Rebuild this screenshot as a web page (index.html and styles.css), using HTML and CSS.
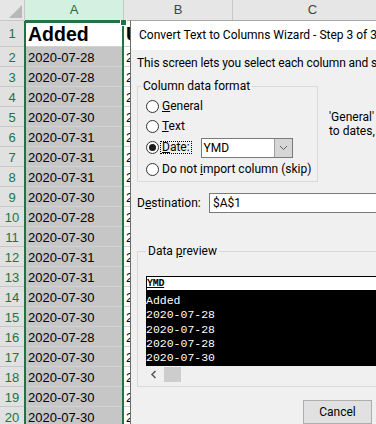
FILE: index.html
```html
<!DOCTYPE html>
<html>
<head>
<meta charset="utf-8">
<link rel="stylesheet" href="styles.css">
</head>
<body>
<div class="sheet">
  <div class="grid">
    <div class="c corner"><svg width="24" height="20" viewBox="0 0 24 20"><polygon points="9,18 22,18 22,5" fill="#b8b8b8"/></svg></div>
    <div class="c ch sel">A</div>
    <div class="c ch">B</div>
    <div class="c ch">C</div>

    <div class="c rh r1">1</div><div class="c a active">Added</div><div class="c b bold">Updated</div><div class="c r1"></div>
    <div class="c rh">2</div><div class="c a">2020-07-28</div><div class="c b">2020-07-28</div><div class="c"></div>
    <div class="c rh">3</div><div class="c a">2020-07-28</div><div class="c b">2020-07-28</div><div class="c"></div>
    <div class="c rh">4</div><div class="c a">2020-07-28</div><div class="c b">2020-07-28</div><div class="c"></div>
    <div class="c rh">5</div><div class="c a">2020-07-30</div><div class="c b">2020-07-30</div><div class="c"></div>
    <div class="c rh">6</div><div class="c a">2020-07-31</div><div class="c b">2020-07-31</div><div class="c"></div>
    <div class="c rh">7</div><div class="c a">2020-07-31</div><div class="c b">2020-07-31</div><div class="c"></div>
    <div class="c rh">8</div><div class="c a">2020-07-31</div><div class="c b">2020-07-31</div><div class="c"></div>
    <div class="c rh">9</div><div class="c a">2020-07-30</div><div class="c b">2020-07-30</div><div class="c"></div>
    <div class="c rh">10</div><div class="c a">2020-07-28</div><div class="c b">2020-07-28</div><div class="c"></div>
    <div class="c rh">11</div><div class="c a">2020-07-30</div><div class="c b">2020-07-30</div><div class="c"></div>
    <div class="c rh">12</div><div class="c a">2020-07-31</div><div class="c b">2020-07-31</div><div class="c"></div>
    <div class="c rh">13</div><div class="c a">2020-07-31</div><div class="c b">2020-07-31</div><div class="c"></div>
    <div class="c rh">14</div><div class="c a">2020-07-30</div><div class="c b">2020-07-30</div><div class="c"></div>
    <div class="c rh">15</div><div class="c a">2020-07-30</div><div class="c b">2020-07-30</div><div class="c"></div>
    <div class="c rh">16</div><div class="c a">2020-07-28</div><div class="c b">2020-07-28</div><div class="c"></div>
    <div class="c rh">17</div><div class="c a">2020-07-30</div><div class="c b">2020-07-30</div><div class="c"></div>
    <div class="c rh">18</div><div class="c a">2020-07-30</div><div class="c b">2020-07-30</div><div class="c"></div>
    <div class="c rh">19</div><div class="c a">2020-07-30</div><div class="c b">2020-07-30</div><div class="c"></div>
    <div class="c rh">20</div><div class="c a">2020-07-30</div><div class="c b">2020-07-30</div><div class="c"></div>
  </div>
  <div class="selection"><span class="handle"></span></div>

  <div class="dialog">
    <div class="titlebar">Convert Text to Columns Wizard - Step 3 of 3</div>
    <div class="dbody">
      <p class="intro">This screen lets you select each column and set the Data Format.</p>
      <div class="format-row">
        <fieldset class="group fmt">
          <legend>Column data format</legend>
          <div class="radio"><span class="dot"></span><span><u>G</u>eneral</span></div>
          <div class="radio"><span class="dot"></span><span><u>T</u>ext</span></div>
          <div class="radio date"><span class="dot on"></span><span class="focus"><u>D</u>ate:</span>
            <div class="select"><span class="val">YMD</span><span class="arrow"><svg width="9" height="6" viewBox="0 0 9 6"><polyline points="1,1 4.5,4.5 8,1" fill="none" stroke="#606060" stroke-width="1"/></svg></span></div>
          </div>
          <div class="radio"><span class="dot"></span><span>Do not <u>i</u>mport column (skip)</span></div>
        </fieldset>
        <p class="hint">'General' converts numeric values to numbers, date values<br>to dates, and all remaining values to text.</p>
      </div>
      <div class="dest"><span class="dlabel">D<u>e</u>stination:</span><div class="input">$A$1</div></div>
      <fieldset class="group preview">
        <legend>Data <u>p</u>review</legend>
        <div class="pv">
          <div class="pvhead"><u>YMD</u></div>
          <div class="pvbody">Added<br>2020-07-28<br>2020-07-28<br>2020-07-28<br>2020-07-30</div>
          <div class="pvscroll"><svg class="lt" width="8" height="9" viewBox="0 0 8 9"><polyline points="5.5,1 2,4.5 5.5,8" fill="none" stroke="#5a5a5a" stroke-width="1.6"/></svg><span class="thumb"></span></div>
        </div>
      </fieldset>
      <div class="buttons"><span class="btn">Cancel</span></div>
    </div>
  </div>
</div>
</body>
</html>
```

FILE: styles.css
```css
html, body {
  margin: 0;
  padding: 0;
}
body {
  width: 376px;
  height: 424px;
  overflow: hidden;
  background: #ffffff;
}
.sheet {
  position: relative;
  width: 376px;
  height: 424px;
  overflow: hidden;
}
.grid {
  display: grid;
  grid-template-columns: 25px 99px 109px 160px;
  grid-template-rows: 21px 26px repeat(19, 20px);
  font-family: "Liberation Sans", Arial, sans-serif;
  font-size: 13px;
  color: #000;
}
.c {
  box-sizing: border-box;
  border-right: 1px solid #d4d4d4;
  border-bottom: 1px solid #d4d4d4;
  overflow: hidden;
  white-space: nowrap;
  padding-top: 2px;
  line-height: 18px;
}
.corner {
  background: #e6e6e6;
  border-right-color: #c8c8c8;
  border-bottom-color: #c8c8c8;
  padding: 0;
  line-height: 0;
}
.ch {
  background: #e6e6e6;
  color: #444;
  text-align: center;
  border-right-color: #c8c8c8;
  border-bottom-color: #bdbdbd;
  padding-top: 1px;
}
.ch.sel {
  background: #d3f0e0;
  color: #1e6b41;
  border-bottom: 1px solid #217346;
}
.rh {
  background: #e1e1e1;
  color: #217346;
  text-align: center;
  border-right-color: #bdbdbd;
  border-bottom-color: #c8c8c8;
}
.a {
  background: #c6c6c6;
  padding-left: 3px;
  border-bottom-color: #d2d2d2;
}
.b {
  padding-left: 2px;
}
.active {
  background: #ffffff;
  font-weight: bold;
  font-size: 19.5px;
  line-height: 23px;
  padding-top: 2px;
}
.bold {
  font-weight: bold;
  font-size: 19.5px;
  line-height: 23px;
}
.r1 {
  padding-top: 4px;
}
.selection {
  position: absolute;
  left: 24px;
  top: 21px;
  width: 100px;
  height: 420px;
  box-sizing: border-box;
  border: 2px solid #217346;
}
.handle {
  position: absolute;
  right: -5px;
  top: -3px;
  width: 5px;
  height: 5px;
  background: #217346;
  border: 1px solid #fff;
  border-top: none;
}

/* dialog */
.dialog {
  position: absolute;
  left: 130px;
  top: 20px;
  width: 262px;
  height: 420px;
  box-sizing: border-box;
  background: #f0f0f0;
  border-top: 1px solid #a8a8a8;
  border-left: 1px solid #6a6a6a;
  font-family: Roboto, "Liberation Sans", sans-serif;
  font-size: 12px;
  color: #000;
  white-space: nowrap;
  overflow: hidden;
}
.titlebar {
  height: 29px;
  line-height: 29px;
  background: #ffffff;
  padding-left: 8px;
}
.dbody {
  padding-left: 6px;
}
.intro {
  margin: 6px 0 0;
  line-height: 15px;
  letter-spacing: -0.1px;
}
.format-row {
  display: flex;
  align-items: flex-start;
  margin-top: 8px;
}
.group {
  margin: 0;
  border: 1px solid #d9d9d9;
  padding: 0 0 0 3px;
  min-width: 0;
}
.group legend {
  padding: 0 2px;
  line-height: 15px;
}
.fmt {
  flex: none;
  width: 181px;
  box-sizing: border-box;
  padding-top: 2px;
  padding-bottom: 2px;
}
.radio {
  display: flex;
  align-items: center;
  height: 20px;
  padding-left: 5px;
}
.radio.date {
  height: 21px;
  margin-top: 1px;
  margin-bottom: 1px;
}
.dot {
  width: 13px;
  height: 13px;
  box-sizing: border-box;
  border: 1px solid #333;
  border-radius: 50%;
  background: #fff;
  margin-right: 3px;
  display: flex;
  align-items: center;
  justify-content: center;
  flex: none;
}
.dot.on::after {
  content: "";
  width: 7px;
  height: 7px;
  border-radius: 50%;
  background: #1a1a1a;
}
.focus {
  border: 1px dotted #000;
  line-height: 11px;
  padding: 0 1px 0 1px;
  margin-left: -2px;
}
.select {
  display: flex;
  margin-left: 9px;
  width: 92px;
  height: 20px;
  box-sizing: border-box;
  border: 1px solid #7a7a7a;
  background: #fff;
}
.val {
  flex: 1;
  line-height: 18px;
  padding-left: 2px;
}
.arrow {
  width: 17px;
  background: #d6d6d6;
  border-left: 1px solid #a0a0a0;
  display: flex;
  align-items: center;
  justify-content: center;
}
.hint {
  flex: none;
  margin: 31px 0 0 11px;
  line-height: 14px;
}
.dest {
  display: flex;
  align-items: center;
  margin-top: 11px;
}
.dlabel {
  flex: none;
  width: 72px;
}
.input {
  flex: none;
  width: 200px;
  height: 20px;
  box-sizing: border-box;
  border: 1px solid #7a7a7a;
  background: #fff;
  line-height: 18px;
  padding-left: 3px;
}
.preview {
  margin-top: 31px;
  width: 300px;
  box-sizing: border-box;
  padding: 0 0 3px 8px;
}
.pv {
  margin-top: 17px;
}
.pvhead {
  height: 15px;
  box-sizing: border-box;
  background: #fff;
  border-top: 1px solid #000;
  border-left: 1px solid #000;
  border-bottom: 1px solid #000;
  font-family: "Liberation Mono", monospace;
  font-size: 10px;
  line-height: 14px;
  letter-spacing: -0.3px;
  font-weight: bold;
}
.pvbody {
  background: #000;
  color: #fff;
  font-family: "Liberation Mono", monospace;
  font-size: 11.5px;
  line-height: 14.3px;
  height: 75px;
  box-sizing: border-box;
  padding-top: 3px;
}
.pvscroll {
  height: 17px;
  display: flex;
  align-items: center;
}
.lt {
  margin-left: 4px;
}
.thumb {
  margin-left: 6px;
  width: 17px;
  height: 15px;
  background: #cdcdcd;
}
.buttons {
  display: flex;
  margin-top: 13px;
  padding-left: 166px;
}
.btn {
  width: 69px;
  height: 24px;
  box-sizing: border-box;
  background: #e1e1e1;
  border: 1px solid #adadad;
  text-align: center;
  line-height: 22px;
}
```
